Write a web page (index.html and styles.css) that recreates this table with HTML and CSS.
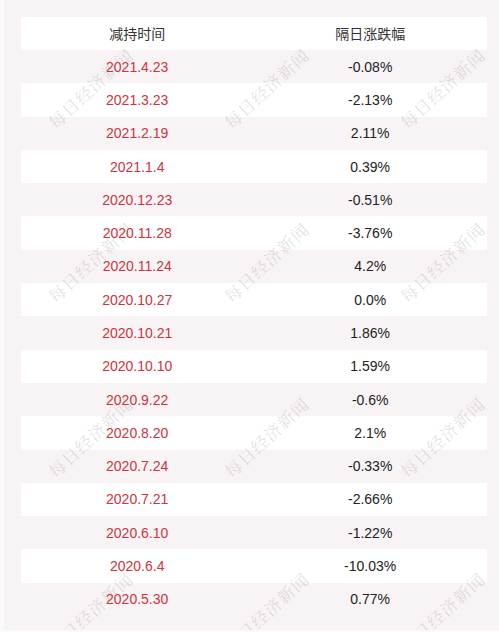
FILE: index.html
```html
<!DOCTYPE html>
<html lang="zh-CN">
<head>
    <meta charset="UTF-8">
    <meta name="viewport" content="width=device-width, initial-scale=1.0">
    <title>减持时间</title>
    <link rel="stylesheet" href="styles.css">
</head>
<body>
    <div class="page">
        <div class="table">
            <div class="row head">
                <span>减持时间</span>
                <span>隔日涨跌幅</span>
            </div>
            <div class="row"><span class="date">2021.4.23</span><span>-0.08%</span></div>
            <div class="row"><span class="date">2021.3.23</span><span>-2.13%</span></div>
            <div class="row"><span class="date">2021.2.19</span><span>2.11%</span></div>
            <div class="row"><span class="date">2021.1.4</span><span>0.39%</span></div>
            <div class="row"><span class="date">2020.12.23</span><span>-0.51%</span></div>
            <div class="row"><span class="date">2020.11.28</span><span>-3.76%</span></div>
            <div class="row"><span class="date">2020.11.24</span><span>4.2%</span></div>
            <div class="row"><span class="date">2020.10.27</span><span>0.0%</span></div>
            <div class="row"><span class="date">2020.10.21</span><span>1.86%</span></div>
            <div class="row"><span class="date">2020.10.10</span><span>1.59%</span></div>
            <div class="row"><span class="date">2020.9.22</span><span>-0.6%</span></div>
            <div class="row"><span class="date">2020.8.20</span><span>2.1%</span></div>
            <div class="row"><span class="date">2020.7.24</span><span>-0.33%</span></div>
            <div class="row"><span class="date">2020.7.21</span><span>-2.66%</span></div>
            <div class="row"><span class="date">2020.6.10</span><span>-1.22%</span></div>
            <div class="row"><span class="date">2020.6.4</span><span>-10.03%</span></div>
            <div class="row"><span class="date">2020.5.30</span><span>0.77%</span></div>
        </div>

        <!-- 水印 -->
        <span class="mark m1">每日经济新闻</span>
        <span class="mark m2">每日经济新闻</span>
        <span class="mark m3">每日经济新闻</span>
        <span class="mark m4">每日经济新闻</span>
        <span class="mark m5">每日经济新闻</span>
        <span class="mark m6">每日经济新闻</span>
        <span class="mark m7">每日经济新闻</span>
        <span class="mark m8">每日经济新闻</span>
        <span class="mark m9">每日经济新闻</span>
        <span class="mark m10">每日经济新闻</span>
        <span class="mark m11">每日经济新闻</span>
        <span class="mark m12">每日经济新闻</span>
    </div>
</body>
</html>
```

FILE: styles.css
```css
*{
    margin: 0;
    padding: 0;
    box-sizing: border-box;
}

html, body{
    width: 499px;
    height: 632px;
    overflow: hidden;
    background-color: #fbfafa;
}

.page{
    position: relative;
    height: 630px;
    margin-left: 4px;
    padding: 16.7px 13px 0 16.7px;
    background-color: #f8f4f5;
    overflow: hidden;
}

.table{
    width: 466px;
}

.table .row{
    display: grid;
    grid-template-columns: 1fr 1fr;
    height: 33.3px;
    align-items: center;
    text-align: center;
    font-family: "Liberation Sans", Arial, "Noto Sans CJK SC", sans-serif;
    font-size: 14px;
    color: #222;
}

.table .row:nth-child(odd){
    background-color: #fff;
}

.table .head{
    font-family: "Noto Sans CJK SC", sans-serif;
    color: #333;
}

.table .date{
    color: #cc3440;
}

.mark{
    position: absolute;
    transform: translate(-50%, -50%) rotate(-43deg);
    font-family: "Noto Serif CJK SC", "Noto Sans CJK SC", serif;
    font-size: 17px;
    letter-spacing: 1px;
    white-space: nowrap;
    color: rgba(120, 110, 112, 0.22);
    pointer-events: none;
}

.m1{ left: 86px; top: 88px; }
.m2{ left: 262px; top: 88px; }
.m3{ left: 438px; top: 88px; }
.m4{ left: 86px; top: 262px; }
.m5{ left: 262px; top: 262px; }
.m6{ left: 438px; top: 262px; }
.m7{ left: 86px; top: 437px; }
.m8{ left: 262px; top: 437px; }
.m9{ left: 438px; top: 437px; }
.m10{ left: 86px; top: 612px; }
.m11{ left: 262px; top: 612px; }
.m12{ left: 438px; top: 612px; }
```
